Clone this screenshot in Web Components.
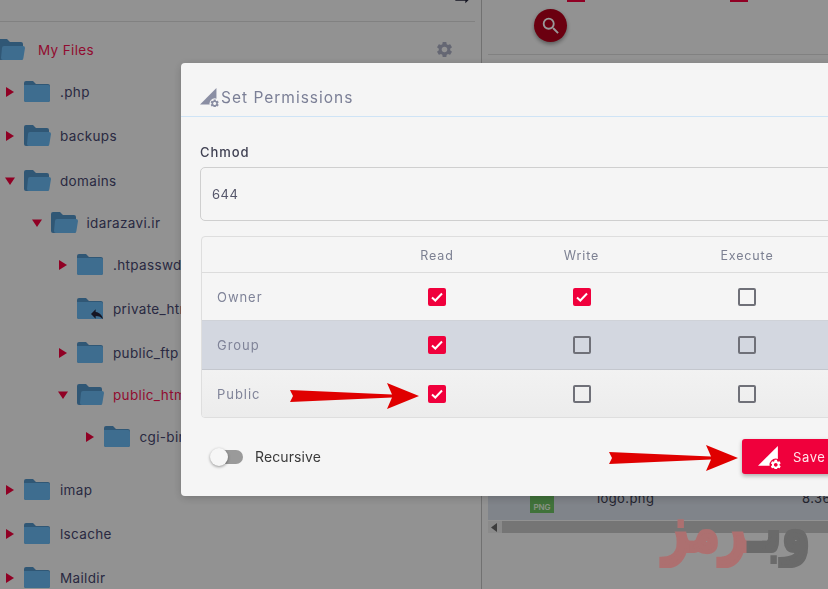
<!DOCTYPE html>
<html>
<head>
<meta charset="utf-8">
<title>Set Permissions</title>
<style>
    html, body {
        margin: 0;
        height: 589px;
        overflow: hidden;
        background: #f4f4f4;
        font-family: Inter, "Noto Sans", sans-serif;
    }
</style>
</head>
<body>
<file-manager>
    <tree-panel slot="tree">
        <tree-row depth="-1" icon="open" active gear style="--gap:0px">My Files</tree-row>
        <tree-row depth="0" arrow="right" style="--gap:-2px">.php</tree-row>
        <tree-row depth="0" arrow="right" icon="open">backups</tree-row>
        <tree-row depth="0" arrow="down" icon="open" style="--gap:1px">domains</tree-row>
        <tree-row depth="1" arrow="down" icon="open" style="--gap:-2px">idarazavi.ir</tree-row>
        <tree-row depth="2" arrow="right" style="--gap:-2px">.htpasswds</tree-row>
        <tree-row depth="2" icon="link">private_html</tree-row>
        <tree-row depth="2" arrow="right">public_ftp</tree-row>
        <tree-row depth="2" arrow="down" icon="open" active style="--gap:-2px">public_html</tree-row>
        <tree-row depth="3" arrow="right" style="--gap:-2px">cgi-bin</tree-row>
        <tree-row depth="0" arrow="right" style="--gap:9px">imap</tree-row>
        <tree-row depth="0" arrow="right">lscache</tree-row>
        <tree-row depth="0" arrow="right">Maildir</tree-row>
    </tree-panel>
    <files-panel slot="files"></files-panel>
</file-manager>

<perm-modal>
    <span slot="title">Set Permissions</span>
    <field-box label="Chmod" value="644"></field-box>
    <perm-table>
        <perm-row label="Owner" read write></perm-row>
        <perm-row label="Group" read tone="group"></perm-row>
        <perm-row label="Public" read tone="public"></perm-row>
    </perm-table>
    <modal-actions>
        <toggle-switch>Recursive</toggle-switch>
        <save-button slot="save">Save</save-button>
    </modal-actions>
</perm-modal>

<note-arrow x="290" y="383"></note-arrow>
<note-arrow x="609" y="445"></note-arrow>
<water-mark></water-mark>

<script>
const GEAR = 'M19.14 12.94c.04-.3.06-.61.06-.94 0-.32-.02-.64-.07-.94l2.03-1.58c.18-.14.23-.41.12-.61l-1.92-3.32c-.12-.22-.37-.29-.59-.22l-2.39.96c-.5-.38-1.03-.7-1.62-.94l-.36-2.54c-.04-.24-.24-.41-.48-.41h-3.84c-.24 0-.43.17-.47.41l-.36 2.54c-.59.24-1.13.57-1.62.94l-2.39-.96c-.22-.08-.47 0-.59.22L2.74 8.87c-.12.21-.08.47.12.61l2.03 1.58c-.05.3-.09.63-.09.94s.02.64.07.94l-2.03 1.58c-.18.14-.23.41-.12.61l1.92 3.32c.12.22.37.29.59.22l2.39-.96c.5.38 1.03.7 1.62.94l.36 2.54c.05.24.24.41.48.41h3.84c.24 0 .44-.17.47-.41l.36-2.54c.59-.24 1.13-.56 1.62-.94l2.39.96c.22.08.47 0 .59-.22l1.92-3.32c.12-.22.07-.47-.12-.61l-2.01-1.58zM12 15.6c-1.98 0-3.6-1.62-3.6-3.6s1.62-3.6 3.6-3.6 3.6 1.62 3.6 3.6-1.62 3.6-3.6 3.6z';

// triangle with a small gear in its corner, used in the title and on the button
function permIcon(width, height, color, cut) {
    return `<svg width="${width}" height="${height}" viewBox="0 0 22 22">
        <path d="M0 19L19 0V19Z" fill="${color}"/>
        <circle cx="17" cy="18" r="6" fill="${cut}"/>
        <svg x="11" y="12" width="12" height="12" viewBox="0 0 24 24"><path d="${GEAR}" fill="${color}"/></svg>
    </svg>`;
}

class FileManager extends HTMLElement {
    constructor() {
        super();
        this.attachShadow({mode: 'open'});
        this.shadowRoot.innerHTML = `
            <style>
                :host {
                    display: grid;
                    grid-template-columns: 482px 1fr;
                    height: 589px;
                    overflow: hidden;
                    color: #4a4a66;
                }
                #left {
                    box-sizing: border-box;
                    border-right: 1px solid #bdbdbd;
                    overflow: hidden;
                }
            </style>
            <div id="left"><slot name="tree"></slot></div>
            <div><slot name="files"></slot></div>
        `;
    }
}

class TreePanel extends HTMLElement {
    constructor() {
        super();
        this.attachShadow({mode: 'open'});
        this.shadowRoot.innerHTML = `
            <style>
                :host { display: block; }
                header {
                    height: 21px;
                    margin-right: 6px;
                    border-bottom: 1px solid #d8d8d8;
                    display: flex;
                    justify-content: flex-end;
                    padding-right: 3px;
                    overflow: hidden;
                }
                header svg { margin-top: -10px; }
                main {
                    padding-top: 6px;
                    display: flex;
                    flex-direction: column;
                }
            </style>
            <header>
                <svg width="20" height="20" viewBox="0 0 24 24"><path d="M16.01 11H4v2h12.01v3L20 12l-3.99-4z" fill="#23233a"/></svg>
            </header>
            <main><slot></slot></main>
        `;
    }
}

class TreeRow extends HTMLElement {
    constructor() {
        super();
        this.attachShadow({mode: 'open'});
    }

    connectedCallback() {
        const depth = Number(this.getAttribute('depth'));
        const arrow = this.getAttribute('arrow');
        const icon = this.getAttribute('icon');
        const arrowShape = arrow === 'right'
            ? '<path d="M1 0L9 5L1 10Z"/>'
            : arrow === 'down' ? '<path d="M0 1.5H10L5 9Z"/>' : '';
        const folder = icon === 'open'
            ? `<path d="M2 0h7l3 3h11a2 2 0 0 1 2 2v14a2 2 0 0 1-2 2H2a2 2 0 0 1-2-2V2a2 2 0 0 1 2-2z" fill="#5191c4"/>
               <path d="M6 7h19a2 2 0 0 1 2 2l-1.6 10a2 2 0 0 1-2 2H5a2 2 0 0 1-2-2l1-10a2 2 0 0 1 2-2z" fill="#68b6ee"/>`
            : `<path d="M2 0h7l3 3h12a2 2 0 0 1 2 2v14a2 2 0 0 1-2 2H2a2 2 0 0 1-2-2V2a2 2 0 0 1 2-2z" fill="#5191c4"/>
               <path d="M0 4h24a2 2 0 0 1 2 2v13a2 2 0 0 1-2 2H2a2 2 0 0 1-2-2z" fill="#68b6ee"/>`;
        const link = icon === 'link'
            ? '<svg x="12" y="8" width="16" height="16" viewBox="0 0 24 24"><path d="M10 9V5l-7 7 7 7v-4.1c5 0 8.5 1.6 11 5.1-1-5-4-10-11-11z" fill="#23233a"/></svg>'
            : '';
        const gear = this.hasAttribute('gear')
            ? `<svg id="gear" width="19" height="19" viewBox="0 0 24 24"><path d="${GEAR}" fill="#a9acc0"/></svg>`
            : '';
        this.shadowRoot.innerHTML = `
            <style>
                :host {
                    display: flex;
                    align-items: center;
                    height: 44px;
                    margin-top: var(--gap, 0);
                    margin-left: ${depth * 26.5}px;
                    font-size: 13.5px;
                    letter-spacing: .35px;
                    color: #46466e;
                    white-space: nowrap;
                    position: relative;
                }
                :host([active]) { color: #f21350; }
                #arrow { width: 10px; height: 10px; margin: 0 9px 0 5px; fill: #f0003c; flex: none; }
                #folder { width: 28px; height: 24px; margin-top: 1px; flex: none; margin-right: 8px; overflow: visible; }
                :host([gear]) #folder { margin-right: 12.5px; }
                #gear { position: absolute; left: 461px; top: 12px; }
            </style>
            <svg id="arrow" viewBox="0 0 10 10">${arrowShape}</svg>
            <svg id="folder" viewBox="0 0 28 24">${folder}${link}</svg>
            <slot></slot>
            ${gear}
        `;
    }
}

class FilesPanel extends HTMLElement {
    constructor() {
        super();
        this.attachShadow({mode: 'open'});
        this.shadowRoot.innerHTML = `
            <style>
                :host { display: block; padding-left: 6px; font-size: 13px; color: #3c3c50; }
                #tools { height: 2px; display: flex; gap: 145px; padding-left: 79px; }
                #tools i { width: 18px; height: 2px; background: #f0003c; }
                #top { display: flow-root; height: 52px; border-bottom: 1px solid #d8d8d8; }
                #search {
                    width: 33px;
                    height: 33px;
                    margin: 7px 0 0 46px;
                    border-radius: 50%;
                    background: #b3001b;
                    box-shadow: 0 2px 4px rgba(0,0,0,.4);
                    display: flex;
                    align-items: center;
                    justify-content: center;
                }
                #list { height: 478px; display: flex; flex-direction: column; justify-content: flex-end; }
                #row {
                    height: 44px;
                    background: #d6dce6;
                    display: flex;
                    align-items: center;
                    position: relative;
                }
                #png {
                    width: 24px;
                    height: 30px;
                    margin: 0 0 0 42px;
                    background: #6cbf62;
                    clip-path: polygon(0 35%, 45% 0, 100% 0, 100% 100%, 0 100%);
                    color: #e2f4df;
                    font-size: 8px;
                    font-weight: 600;
                    letter-spacing: 0;
                    text-align: center;
                    display: flex;
                    align-items: flex-end;
                    justify-content: center;
                    padding-bottom: 1px;
                    box-sizing: border-box;
                }
                #name { margin: 0 0 0 43px; letter-spacing: .4px; }
                #size { position: absolute; left: 314px; letter-spacing: .4px; white-space: nowrap; }
                #bar { height: 12px; background: #e6e6e6; display: flex; align-items: center; margin-top: 1px; }
                #bar svg { margin: 0 4px 0 3px; }
                #bar i { flex: 1; height: 12px; background: #c4c4c4; }
            </style>
            <div id="tools"><i></i><i></i></div>
            <div id="top">
                <div id="search">
                    <svg width="22" height="22" viewBox="0 0 24 24"><path d="M15.5 14h-.79l-.28-.27A6.47 6.47 0 0 0 16 9.5 6.5 6.5 0 1 0 9.5 16c1.61 0 3.09-.59 4.23-1.57l.27.28v.79l5 4.99L20.49 19l-4.99-5zm-6 0C7.01 14 5 11.99 5 9.5S7.01 5 9.5 5 14 7.01 14 9.5 11.99 14 9.5 14z" fill="#fff"/></svg>
                </div>
            </div>
            <div id="list">
                <div id="row">
                    <div id="png">PNG</div>
                    <div id="name">logo.png</div>
                    <div id="size">8.36</div>
                </div>
                <div id="bar">
                    <svg width="7" height="9" viewBox="0 0 7 9"><path d="M6 0V9L0 4.5Z" fill="#666"/></svg>
                    <i></i>
                </div>
            </div>
        `;
    }
}

class PermModal extends HTMLElement {
    constructor() {
        super();
        this.attachShadow({mode: 'open'});
        this.shadowRoot.innerHTML = `
            <style>
                :host {
                    position: fixed;
                    inset: 0;
                    overflow: hidden;
                    color: #3c3c4e;
                }
                #backdrop {
                    position: absolute;
                    inset: 0;
                    background: rgba(0,0,0,0.4);
                }
                #modal {
                    position: absolute;
                    top: 63px;
                    left: 181px;
                    width: 660px;
                    height: 433px;
                    background: #f5f5f5;
                    border-radius: 4px;
                    box-shadow: 0 2px 8px rgba(0,0,0,0.2);
                }
                header {
                    height: 54px;
                    box-sizing: border-box;
                    padding: 16px 0 0 19px;
                    border-bottom: 1px solid #cfe4f6;
                    display: flex;
                    align-items: center;
                    gap: 2px;
                    font-size: 15.5px;
                    letter-spacing: 1px;
                    color: #7b7f96;
                }
                #main {
                    padding: 0 0 0 19px;
                }
            </style>
            <div id="backdrop"></div>
            <div id="modal">
                <header>
                    ${permIcon(19, 19, '#8a8ea3', '#f5f5f5')}
                    <slot name="title"></slot>
                </header>
                <section id="main">
                    <slot></slot>
                </section>
            </div>
        `;
    }
}

class FieldBox extends HTMLElement {
    constructor() {
        super();
        this.attachShadow({mode: 'open'});
    }

    connectedCallback() {
        this.shadowRoot.innerHTML = `
            <style>
                :host { display: block; padding-top: 27px; }
                label {
                    display: block;
                    height: 16px;
                    line-height: 16px;
                    margin-bottom: 7px;
                    font-size: 13px;
                    font-weight: 500;
                    letter-spacing: .95px;
                    color: #3f4052;
                }
                div {
                    height: 52px;
                    border: 1px solid #cfcfcf;
                    border-radius: 5px;
                    padding-left: 11px;
                    display: flex;
                    align-items: center;
                    font-size: 13px;
                    letter-spacing: .5px;
                    color: #55566a;
                }
            </style>
            <label>${this.getAttribute('label')}</label>
            <div>${this.getAttribute('value')}</div>
        `;
    }
}

class PermTable extends HTMLElement {
    constructor() {
        super();
        this.attachShadow({mode: 'open'});
        this.shadowRoot.innerHTML = `
            <style>
                :host {
                    display: block;
                    margin: 15px 0 0 1px;
                    border: 1px solid #dedede;
                    border-radius: 4px;
                    overflow: hidden;
                }
                #head {
                    display: grid;
                    grid-template-columns: 163px 144px 145px 186px;
                    height: 34px;
                    padding-top: 1px;
                    align-items: center;
                    text-align: center;
                    font-size: 12.5px;
                    letter-spacing: .85px;
                    color: #7c8092;
                }
            </style>
            <div id="head"><span></span><span>Read</span><span>Write</span><span>Execute</span></div>
            <slot></slot>
        `;
    }
}

class PermRow extends HTMLElement {
    constructor() {
        super();
        this.attachShadow({mode: 'open'});
    }

    connectedCallback() {
        const box = name => `<check-box ${this.hasAttribute(name) ? 'checked' : ''}></check-box>`;
        this.shadowRoot.innerHTML = `
            <style>
                :host {
                    display: grid;
                    grid-template-columns: 163px 144px 145px 186px;
                    box-sizing: border-box;
                    height: 48px;
                    align-items: center;
                    justify-items: center;
                    border-top: 1px solid #dcdcdc;
                    font-size: 13px;
                    letter-spacing: .95px;
                    color: #7f8398;
                }
                :host([tone="group"]) { background: #d3d7e0; height: 49px; border-top-color: #cfd2d8; }
                :host([tone="public"]) { background: linear-gradient(#f2f2f2, #ececec); border-top-color: #c4c7ce; }
                span { justify-self: start; padding-left: 15px; }
            </style>
            <span>${this.getAttribute('label')}</span>
            ${box('read')}${box('write')}${box('execute')}
        `;
    }
}

class CheckBox extends HTMLElement {
    constructor() {
        super();
        this.attachShadow({mode: 'open'});
        this.shadowRoot.innerHTML = `
            <style>
                :host {
                    display: block;
                    width: 18px;
                    height: 18px;
                }
                div {
                    box-sizing: border-box;
                    width: 18px;
                    height: 18px;
                    border: 2px solid #6f7078;
                    border-radius: 2px;
                }
                :host([checked]) div {
                    background: #f0003c;
                    border-color: #f0003c;
                }
                svg { display: none; }
                :host([checked]) svg { display: block; }
            </style>
            <div>
                <svg width="14" height="14" viewBox="0 0 14 14"><path d="M2 7.5L5.3 10.5L12 3.5" fill="none" stroke="#fff" stroke-width="2"/></svg>
            </div>
        `;
    }
}

class ModalActions extends HTMLElement {
    constructor() {
        super();
        this.attachShadow({mode: 'open'});
        this.shadowRoot.innerHTML = `
            <style>
                :host {
                    display: flex;
                    justify-content: space-between;
                    align-items: center;
                    margin-top: 21px;
                    height: 35px;
                    padding-left: 10px;
                }
            </style>
            <slot></slot>
            <slot name="save"></slot>
        `;
    }
}

class ToggleSwitch extends HTMLElement {
    constructor() {
        super();
        this.attachShadow({mode: 'open'});
        this.shadowRoot.innerHTML = `
            <style>
                :host {
                    display: flex;
                    align-items: center;
                    font-size: 14px;
                    letter-spacing: .1px;
                    color: #3a3a3a;
                }
                #track {
                    width: 30px;
                    height: 14px;
                    margin: 0 12px 0 3px;
                    border-radius: 7px;
                    background: #9a9a9a;
                    position: relative;
                }
                #knob {
                    position: absolute;
                    left: -3px;
                    top: -2px;
                    width: 18px;
                    height: 18px;
                    border-radius: 50%;
                    background: #f6f6f6;
                    box-shadow: 0 1px 3px rgba(0,0,0,.4);
                }
            </style>
            <div id="track"><div id="knob"></div></div>
            <slot></slot>
        `;
    }
}

class SaveButton extends HTMLElement {
    constructor() {
        super();
        this.attachShadow({mode: 'open'});
        this.shadowRoot.innerHTML = `
            <style>
                :host {
                    display: flex;
                    align-items: center;
                    width: 99px;
                    height: 35px;
                    padding-left: 16px;
                    box-sizing: border-box;
                    border-radius: 3px;
                    background: #f0003c;
                    box-shadow: 0 2px 4px rgba(0,0,0,.3);
                    color: #ffe4ea;
                    font-size: 13px;
                    letter-spacing: .6px;
                    gap: 12px;
                }
                svg { flex: none; margin-top: 2px; }
            </style>
            ${permIcon(23, 23, '#fff', '#f0003c')}
            <slot></slot>
        `;
    }
}

// red arrows drawn on top of the screenshot
class NoteArrow extends HTMLElement {
    constructor() {
        super();
        this.attachShadow({mode: 'open'});
    }

    connectedCallback() {
        this.shadowRoot.innerHTML = `
            <style>
                :host {
                    position: fixed;
                    left: ${this.getAttribute('x')}px;
                    top: ${this.getAttribute('y')}px;
                    width: 130px;
                    height: 27px;
                }
            </style>
            <svg width="130" height="27" viewBox="0 0 130 27">
                <path d="M0 7L102 11.5L97 0L129 13L97 26L102 14.5L0 19L3 13Z" fill="#e00000"/>
            </svg>
        `;
    }
}

class WaterMark extends HTMLElement {
    constructor() {
        super();
        this.attachShadow({mode: 'open'});
        this.shadowRoot.innerHTML = `
            <style>
                :host {
                    position: fixed;
                    left: 650px;
                    top: 498px;
                    width: 160px;
                    height: 70px;
                    direction: rtl;
                    font-family: "DejaVu Sans", sans-serif;
                    font-weight: 700;
                    font-size: 46px;
                    line-height: 45px;
                    color: #6a6a6a;
                    -webkit-text-stroke: 3px currentColor;
                    white-space: nowrap;
                    transform: scaleY(1.4);
                    transform-origin: top;
                    clip-path: inset(0 0 20px 0);
                }
                span { color: #ad7070; }
            </style>
            وبـ<span>رمز</span>
        `;
    }
}

customElements.define('file-manager', FileManager);
customElements.define('tree-panel', TreePanel);
customElements.define('tree-row', TreeRow);
customElements.define('files-panel', FilesPanel);
customElements.define('perm-modal', PermModal);
customElements.define('field-box', FieldBox);
customElements.define('perm-table', PermTable);
customElements.define('perm-row', PermRow);
customElements.define('check-box', CheckBox);
customElements.define('modal-actions', ModalActions);
customElements.define('toggle-switch', ToggleSwitch);
customElements.define('save-button', SaveButton);
customElements.define('note-arrow', NoteArrow);
customElements.define('water-mark', WaterMark);
</script>
</body>
</html>
